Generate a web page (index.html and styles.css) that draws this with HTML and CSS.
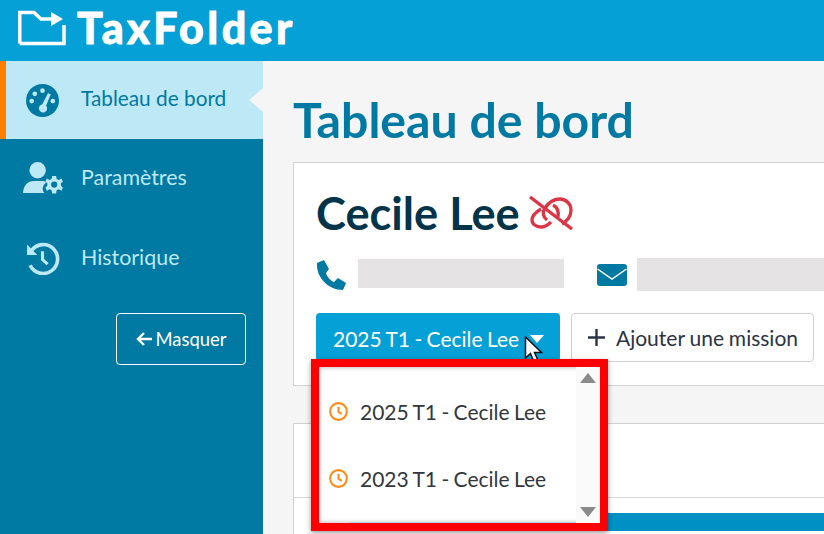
FILE: index.html
```html
<!DOCTYPE html>
<html lang="fr">
<head>
  <meta charset="UTF-8" />
  <meta name="viewport" content="width=device-width, initial-scale=1" />
  <title>Tableau de bord</title>
  <link rel="stylesheet" href="styles.css">
</head>
<body>

  <header class="topbar">
    <svg class="logo-icon" viewBox="0 0 48 36" fill="none" stroke="#fff" stroke-width="3.500">
      <path d="M1.750 33.500V2.500H16L23 9H36" />
      <path d="M46 15V33.500H1.750" />
      <path d="M33 2L45 9L33 16Z" fill="#fff" stroke="none" />
    </svg>
    <span class="logo-text">TaxFolder</span>
  </header>

  <div class="layout">
    <!-- Sidebar -->
    <nav class="sidebar">
      <a class="nav-item active">
        <svg class="nav-icon" viewBox="0 0 32 32">
          <circle cx="16" cy="16" r="16" fill="#0079a3" />
          <g fill="#bde8f5">
            <circle cx="16" cy="6.500" r="2.300" />
            <circle cx="8.500" cy="9.500" r="2.300" />
            <circle cx="5.500" cy="16.500" r="2.300" />
            <circle cx="26" cy="16.500" r="2.300" />
            <path d="M21.300 9L24 10L19.500 21A4 4 0 1 1 15.800 19.700Z" />
          </g>
        </svg>
        <span>Tableau de bord</span>
      </a>
      <a class="nav-item">
        <svg class="nav-icon" viewBox="0 0 42 34">
          <g fill="#bde8f5">
            <circle cx="16" cy="8.500" r="8.500" />
            <path d="M1 32C1 24 6 19.500 12 19.500H20C22 19.500 23.500 20 25 20.800C21 24 20 28.500 23 32Z" />
            <path d="M31 14.500H35L35.600 17.500L37.800 18.500L40.500 17L42 20L40 22V24.500L42 26.500L40.500 29.500L37.800 28L35.600 29L35 32.500H31L30.400 29L28.200 28L25.500 29.500L24 26.500L26 24.500V22L24 20L25.500 17L28.200 18.500L30.400 17.500Z" />
          </g>
          <circle cx="33" cy="23.300" r="3.200" fill="#0079a3" />
        </svg>
        <span>Paramètres</span>
      </a>
      <a class="nav-item">
        <svg class="nav-icon" viewBox="0 0 32 32" fill="none" stroke="#bde8f5">
          <path d="M5.500 8A14 14 0 1 1 4 22.500" stroke-width="3.500" />
          <path d="M1 2.500V12.500H11Z" fill="#bde8f5" stroke="none" />
          <path d="M16 9V17L21 21.500" stroke-width="3" />
        </svg>
        <span>Historique</span>
      </a>
      <div class="hide-row">
        <button class="hide-btn">
          <svg class="hide-arrow" viewBox="0 0 16 14" fill="none" stroke="#fff" stroke-width="2.400">
            <path d="M16 7H2M8 1L2 7L8 13" />
          </svg>
          Masquer
        </button>
      </div>
    </nav>

    <!-- Main -->
    <main class="main">
      <h1>Tableau de bord</h1>

      <section class="card client">
        <h2>
          Cecile Lee
          <svg class="unlink" viewBox="0 0 44 34" fill="none" stroke="#dc3545" stroke-width="3.300">
            <path d="M1 1L43 33" />
            <path d="M12 13C7 16 3 19 3 24C3 28 7 31 12 31C16 31 19 29 22 26" />
            <path d="M16 12C20 6 26 3 31 3C37 3 42 8 42 14C42 20 38 25 33 28" />
            <path d="M16 12C13 16 14 21 18 24M24 9C28 11 30 15 29 21" />
          </svg>
        </h2>

        <div class="contacts">
          <svg class="contact-icon" viewBox="0 0 30 30">
            <path d="M8 0L1 3C0 17 12 30 27 30L30 23L22 18L18 22C15 21 11 17 10 13L13 9Z" fill="#0079a3" />
          </svg>
          <div class="redacted phone"></div>
          <svg class="contact-icon mail" viewBox="0 0 30 22">
            <rect width="30" height="22" rx="3" fill="#0079a3" />
            <path d="M0.500 5L15 15L29.500 5" fill="none" stroke="#fff" stroke-width="1.500" />
          </svg>
          <div class="redacted email"></div>
        </div>

        <div class="actions">
          <div class="mission-select">
            <button class="btn-primary">
              2025 T1 - Cecile Lee
              <span class="caret"></span>
            </button>
            <svg class="cursor" viewBox="0 0 20 28">
              <path d="M1.500 1V22L6.500 17.500L10 26L14 24.300L10.500 16.500H17.500Z" fill="#fff" stroke="#111" stroke-width="1.500" />
            </svg>

            <div class="dropdown">
              <div class="scroll-col">
                <span class="arrow-up"></span>
                <span class="arrow-down"></span>
              </div>
              <div class="dropdown-item">
                <svg class="clock" viewBox="0 0 20 20" fill="none" stroke="#ff8c1a" stroke-width="2.200">
                  <circle cx="10" cy="10" r="8.800" />
                  <path d="M10 5V10.500L13.500 12.500" />
                </svg>
                2025 T1 - Cecile Lee
              </div>
              <div class="dropdown-item">
                <svg class="clock" viewBox="0 0 20 20" fill="none" stroke="#ff8c1a" stroke-width="2.200">
                  <circle cx="10" cy="10" r="8.800" />
                  <path d="M10 5V10.500L13.500 12.500" />
                </svg>
                2023 T1 - Cecile Lee
              </div>
            </div>
          </div>
          <button class="btn-outline">
            <svg class="plus" viewBox="0 0 17 17" fill="none" stroke="#2c3345" stroke-width="2.400">
              <path d="M8.500 0V17M0 8.500H17" />
            </svg>
            Ajouter une mission
          </button>
        </div>
      </section>

      <section class="card second">
        <div class="card-head"></div>
        <div class="card-bar"></div>
      </section>
    </main>
  </div>

</body>
</html>
```

FILE: styles.css
```css
* {
  box-sizing: border-box;
}

html, body {
  height: 100%;
}

body {
  font-family: Lato, 'Open Sans', sans-serif;
  background-color: #f5f5f5;
  margin: 0;
  overflow: hidden;
}

.topbar {
  display: flex;
  align-items: center;
  height: 61px;
  padding: 0 0 6px 18px;
  background-color: #05a0d6;
}

.logo-icon {
  width: 48px;
  height: 36px;
}

.logo-text {
  margin-left: 11px;
  color: #fff;
  font-family: Lato, sans-serif;
  font-size: 43px;
  font-weight: 900;
  line-height: 1.200;
  letter-spacing: 3.400px;
  -webkit-text-stroke: 0.800px #fff;
}

.layout {
  display: flex;
  height: 473px;
}

/* Sidebar */
.sidebar {
  flex: 0 0 263px;
  background-color: #0079a3;
}

.nav-item {
  display: flex;
  align-items: center;
  height: 80px;
  padding: 0 0 2px 22px;
  color: #bde8f5;
  font-size: 21.400px;
}

.nav-item span {
  margin-left: 18px;
  margin-bottom: 2px;
}

.nav-icon {
  flex: 0 0 41px;
  height: 33px;
}

.nav-item.active {
  position: relative;
  height: 78px;
  padding: 0 0 0 20px;
  border-left: 6px solid #ff8000;
  background-color: #bde8f5;
  color: #0079a3;
  font-size: 20.800px;
}

.nav-item.active span {
  margin-bottom: 5px;
}

.nav-item.active .nav-icon {
  flex-basis: 33px;
  margin-right: 4px;
}

.nav-item.active::after {
  content: '';
  position: absolute;
  top: 27px;
  right: 0;
  border-style: solid;
  border-width: 12px 14px 12px 0;
  border-color: transparent #f5f5f5 transparent transparent;
}

.hide-row {
  display: flex;
  justify-content: flex-end;
  padding: 14px 17px 0 0;
}

.hide-btn {
  display: flex;
  align-items: center;
  justify-content: center;
  gap: 4px;
  width: 130px;
  height: 52px;
  padding: 0 0 1px;
  border: 1px solid #fff;
  border-radius: 4px;
  background: transparent;
  color: #fff;
  font-family: inherit;
  font-size: 18.400px;
}

.hide-arrow {
  width: 16px;
  height: 14px;
}

/* Main */
.main {
  flex: 1;
  min-width: 0;
  padding-left: 30px;
}

h1 {
  margin: 29px 0 14px;
  color: #0079a3;
  font-size: 48.200px;
  font-weight: 700;
  line-height: 58px;
  white-space: nowrap;
}

.card {
  border: 1px solid #d2d2d2;
  border-right: none;
  background-color: #fff;
}

.client {
  height: 224px;
  padding: 21px 0 0 22px;
}

h2 {
  display: flex;
  align-items: center;
  gap: 9px;
  margin: 0;
  color: #04344a;
  font-size: 45.200px;
  font-weight: 700;
  line-height: 58px;
}

.unlink {
  width: 44px;
  height: 34px;
}

.contacts {
  display: flex;
  align-items: center;
  height: 33px;
  margin-top: 16px;
}

.contact-icon {
  width: 30px;
  height: 30px;
}

.contact-icon.mail {
  height: 22px;
  margin-left: 33px;
}

.redacted {
  background-color: #e5e3e4;
}

.phone {
  width: 206px;
  height: 29px;
  margin-left: 12px;
  margin-top: -2px;
}

.email {
  flex: 1;
  height: 33px;
  margin-left: 10px;
}

.actions {
  display: flex;
  align-items: flex-start;
  gap: 11px;
  margin-top: 22px;
}

.mission-select {
  position: relative;
}

.btn-primary {
  display: flex;
  align-items: center;
  width: 244px;
  height: 48px;
  padding: 2px 0 0 17px;
  border: none;
  border-radius: 4px;
  background-color: #05a0d6;
  color: #fff;
  font-family: inherit;
  font-size: 21px;
  word-spacing: -1px;
  white-space: nowrap;
}

.caret {
  margin-left: 11px;
  margin-top: 1px;
  border-style: solid;
  border-width: 8px 7px 0;
  border-color: #fff transparent transparent;
}

.cursor {
  position: absolute;
  top: 23px;
  left: 208px;
  width: 20px;
  height: 28px;
}

.btn-outline {
  display: flex;
  align-items: center;
  gap: 11px;
  height: 49px;
  padding: 0 15px 0 16px;
  border: 1px solid #cfcfcf;
  border-radius: 4px;
  background-color: #fff;
  color: #2c3345;
  font-family: inherit;
  font-size: 21px;
  word-spacing: -0.500px;
  white-space: nowrap;
}

.plus {
  width: 17px;
  height: 17px;
}

.dropdown {
  position: absolute;
  z-index: 2;
  top: 46px;
  left: -5px;
  width: 297px;
  height: 172px;
  padding-top: 11px;
  border: 8px solid #ff0000;
  background-color: #fff;
  box-shadow: 0 2px 5px rgba(0, 0, 0, 0.4), inset 0 0 5px rgba(0, 0, 0, 0.35);
}

.dropdown::after {
  content: '';
  position: absolute;
  right: 24px;
  bottom: 0;
  left: 30px;
  height: 1px;
  background-color: #a9d8e8;
}

.scroll-col {
  position: absolute;
  top: 0;
  right: 0;
  bottom: 0;
  display: flex;
  flex-direction: column;
  justify-content: space-between;
  align-items: center;
  width: 24px;
  padding: 6px 1px 6px 0;
  background-color: #fafafa;
}

.arrow-up {
  border-style: solid;
  border-width: 0 8px 10px;
  border-color: transparent transparent #8a8a8a;
}

.arrow-down {
  border-style: solid;
  border-width: 10px 8px 0;
  border-color: #8a8a8a transparent transparent;
}

.dropdown-item {
  display: flex;
  align-items: center;
  height: 67px;
  padding-left: 10px;
  color: #33373d;
  font-size: 21px;
  word-spacing: -1px;
  white-space: nowrap;
}

.clock {
  width: 19px;
  height: 19px;
  margin-right: 12px;
}

.second {
  position: relative;
  height: 111px;
  margin-top: 37px;
  border-bottom: none;
}

.card-head {
  height: 74px;
  border-bottom: 1px solid #d8d8d8;
}

.card-bar {
  height: 18px;
  margin-top: 15px;
  margin-left: 17px;
  background-color: #0091c4;
}
```
